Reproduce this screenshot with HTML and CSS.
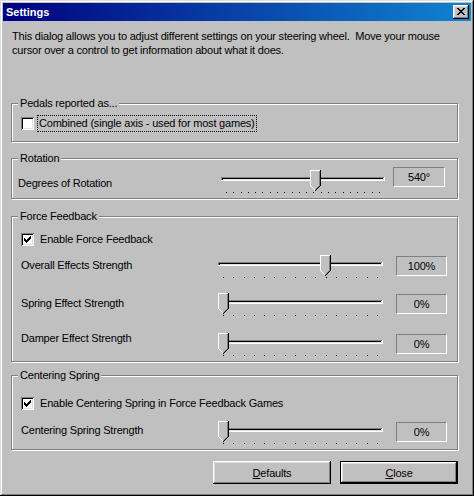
FILE: index.html
```html
<!DOCTYPE html>
<html>
<head>
<meta charset="utf-8">
<title>Settings</title>
<link rel="stylesheet" href="styles.css">
</head>
<body>
<svg class="defs" width="0" height="0" aria-hidden="true">
  <defs>
    <symbol id="thumb" viewBox="0 0 11 21" width="11" height="21">
      <path fill="#c0c0c0" d="M0 0h11v16H0z M1 16h9v1H1z M2 17h7v1H2z M3 18h5v1H3z M4 19h3v1H4z M5 20h1v1H5z"/>
      <path fill="#ffffff" d="M0 0h10v1H1v15H0z M1 16h1v1H1z M2 17h1v1H2z M3 18h1v1H3z M4 19h1v1H4z"/>
      <path fill="#808080" d="M9 1h1v15H9z M8 16h1v1H8z M7 17h1v1H7z M6 18h1v1H6z M5 19h1v1H5z"/>
      <path fill="#000000" d="M10 0h1v16h-1z M9 16h1v1H9z M8 17h1v1H8z M7 18h1v1H7z M6 19h1v1H6z M5 20h1v1H5z"/>
    </symbol>
    <symbol id="ticks16" viewBox="0 0 165 1" width="165" height="1">
      <path fill="#000" d="M5 0h1v1H5z M15 0h1v1h-1z M26 0h1v1h-1z M36 0h1v1h-1z M46 0h1v1h-1z M56 0h1v1h-1z M67 0h1v1h-1z M77 0h1v1h-1z M87 0h1v1h-1z M97 0h1v1h-1z M108 0h1v1h-1z M118 0h1v1h-1z M128 0h1v1h-1z M138 0h1v1h-1z M149 0h1v1h-1z M159 0h1v1h-1z"/>
    </symbol>
    <symbol id="ticks22" viewBox="0 0 164 1" width="164" height="1">
      <path fill="#000" d="M5 0h1v1H5z M12 0h1v1h-1z M20 0h1v1h-1z M27 0h1v1h-1z M34 0h1v1h-1z M41 0h1v1h-1z M49 0h1v1h-1z M56 0h1v1h-1z M63 0h1v1h-1z M71 0h1v1h-1z M78 0h1v1h-1z M85 0h1v1h-1z M92 0h1v1h-1z M100 0h1v1h-1z M107 0h1v1h-1z M114 0h1v1h-1z M122 0h1v1h-1z M129 0h1v1h-1z M136 0h1v1h-1z M143 0h1v1h-1z M151 0h1v1h-1z M158 0h1v1h-1z"/>
    </symbol>
    <symbol id="chan165" viewBox="0 0 165 4" width="165" height="4">
      <path fill="#808080" d="M0 0h164v1H1v2H0z"/>
      <path fill="#000000" d="M1 1h162v1H2v1H1z"/>
      <path fill="#dfdfdf" d="M2 2h161v1H2z M163 1h1v2h-1z"/>
      <path fill="#ffffff" d="M0 3h165v1H0z M164 0h1v3h-1z"/>
    </symbol>
    <symbol id="chan164" viewBox="0 0 164 4" width="164" height="4">
      <path fill="#808080" d="M0 0h163v1H1v2H0z"/>
      <path fill="#000000" d="M1 1h161v1H2v1H1z"/>
      <path fill="#dfdfdf" d="M2 2h160v1H2z M162 1h1v2h-1z"/>
      <path fill="#ffffff" d="M0 3h164v1H0z M163 0h1v3h-1z"/>
    </symbol>
    <symbol id="check" viewBox="0 0 13 13" width="13" height="13">
      <path fill="#000" d="M3 5h1v3H3z M4 6h1v3H4z M5 7h1v3H5z M6 6h1v3H6z M7 5h1v3H7z M8 4h1v3H8z M9 3h1v3H9z"/>
    </symbol>
  </defs>
</svg>

<div class="window">
  <div class="titlebar">
    <span class="title">Settings</span>
    <span class="xbtn">
      <svg width="8" height="7" viewBox="0 0 8 7" shape-rendering="crispEdges"><path fill="#000" d="M0 0h2v1H0z M6 0h2v1H6z M1 1h2v1H1z M5 1h2v1H5z M2 2h4v1H2z M3 3h2v1H3z M2 4h4v1H2z M1 5h2v1H1z M5 5h2v1H5z M0 6h2v1H0z M6 6h2v1H6z"/></svg>
    </span>
  </div>

  <div class="content">
    <p class="intro">This dialog allows you to adjust different settings on your steering wheel.&nbsp; Move your mouse<br>cursor over a control to get information about what it does.</p>

    <div class="group g-pedals">
      <div class="legend">Pedals reported as...</div>
      <div class="check-row r-pedals">
        <span class="checkbox"></span>
        <span class="clabel focus">Combined (single axis - used for most games)</span>
      </div>
    </div>

    <div class="group g-rotation">
      <div class="legend">Rotation</div>
      <div class="srow r-rotation">
        <span class="slabel">Degrees of Rotation</span>
        <svg class="slider" width="164" height="24" viewBox="0 0 164 24" shape-rendering="crispEdges">
          <use href="#chan164" x="0" y="7"/>
          <use href="#ticks22" x="0" y="22"/>
          <use href="#thumb" x="89" y="0"/>
        </svg>
        <span class="value">540°</span>
      </div>
    </div>

    <div class="group g-force">
      <div class="legend">Force Feedback</div>
      <div class="check-row r-force">
        <span class="checkbox"><svg width="13" height="13" shape-rendering="crispEdges"><use href="#check"/></svg></span>
        <span class="clabel">Enable Force Feedback</span>
      </div>
      <div class="srow r-overall">
        <span class="slabel">Overall Effects Strength</span>
        <svg class="slider" width="165" height="24" viewBox="0 0 165 24" shape-rendering="crispEdges">
          <use href="#chan165" x="0" y="7"/>
          <use href="#ticks16" x="0" y="22"/>
          <use href="#thumb" x="102" y="0"/>
        </svg>
        <span class="value">100%</span>
      </div>
      <div class="srow r-spring">
        <span class="slabel">Spring Effect Strength</span>
        <svg class="slider" width="165" height="24" viewBox="0 0 165 24" shape-rendering="crispEdges">
          <use href="#chan165" x="0" y="7"/>
          <use href="#ticks16" x="0" y="22"/>
          <use href="#thumb" x="0" y="0"/>
        </svg>
        <span class="value">0%</span>
      </div>
      <div class="srow r-damper">
        <span class="slabel">Damper Effect Strength</span>
        <svg class="slider" width="165" height="24" viewBox="0 0 165 24" shape-rendering="crispEdges">
          <use href="#chan165" x="0" y="7"/>
          <use href="#ticks16" x="0" y="22"/>
          <use href="#thumb" x="0" y="0"/>
        </svg>
        <span class="value">0%</span>
      </div>
    </div>

    <div class="group g-center">
      <div class="legend">Centering Spring</div>
      <div class="check-row r-center">
        <span class="checkbox"><svg width="13" height="13" shape-rendering="crispEdges"><use href="#check"/></svg></span>
        <span class="clabel">Enable Centering Spring in Force Feedback Games</span>
      </div>
      <div class="srow r-cstrength">
        <span class="slabel">Centering Spring Strength</span>
        <svg class="slider" width="165" height="24" viewBox="0 0 165 24" shape-rendering="crispEdges">
          <use href="#chan165" x="0" y="7"/>
          <use href="#ticks16" x="0" y="22"/>
          <use href="#thumb" x="0" y="0"/>
        </svg>
        <span class="value">0%</span>
      </div>
    </div>

    <div class="buttons">
      <button class="btn"><u>D</u>efaults</button>
      <button class="btn default"><u>C</u>lose</button>
    </div>
  </div>
</div>
</body>
</html>
```

FILE: styles.css
```css
* { box-sizing: border-box; }

html, body {
  margin: 0;
  background: #c0c0c0;
}

body {
  font-family: "Liberation Sans", Arial, sans-serif;
  font-size: 11px;
  letter-spacing: -0.2px;
  color: #000;
}

.defs {
  position: absolute;
  width: 0;
  height: 0;
  overflow: hidden;
}

.window {
  width: 474px;
  height: 496px;
  padding: 3px;
  background: #c0c0c0;
  box-shadow: inset -1px -1px #000, inset 1px 1px #dfdfdf,
              inset -2px -2px #808080, inset 2px 2px #fff;
  overflow: hidden;
}

.titlebar {
  height: 18px;
  display: flex;
  align-items: center;
  padding-left: 3px;
  background: linear-gradient(to right, #000080, #1084d0);
  color: #fff;
}

.title {
  font-weight: bold;
  line-height: 13px;
  letter-spacing: 0;
}

.xbtn {
  margin-left: auto;
  margin-right: 2px;
  width: 16px;
  height: 14px;
  background: #c0c0c0;
  box-shadow: inset -1px -1px #000, inset 1px 1px #fff,
              inset -2px -2px #808080, inset 2px 2px #dfdfdf;
  display: flex;
  padding: 3px 0 0 4px;
}

.xbtn svg { display: block; }

.content {
  padding: 0 13px 0 8px;
}

.intro {
  margin: 8px 0 0 1px;
  line-height: 14px;
  white-space: nowrap;
}

.group {
  border: 1px solid #808080;
  box-shadow: inset 1px 1px #fff, 1px 1px #fff;
}

.legend {
  width: max-content;
  margin: -7px 0 0 6px;
  padding: 0 2px;
  line-height: 13px;
  background: #c0c0c0;
}

.g-pedals  { margin-top: 46px; height: 39px; }
.g-rotation{ margin-top: 16px; height: 41px; }
.g-force   { margin-top: 17px; height: 146px; }
.g-center  { margin-top: 13px; height: 75px; }

.check-row {
  display: flex;
  align-items: center;
  height: 13px;
  padding-left: 9px;
}

.checkbox {
  flex: none;
  width: 13px;
  height: 13px;
  background: #fff;
  box-shadow: inset 1px 1px #808080, inset -1px -1px #fff,
              inset 2px 2px #000, inset -2px -2px #dfdfdf;
}

.checkbox svg { display: block; }

.clabel {
  margin-left: 6px;
  line-height: 13px;
  white-space: nowrap;
}

.clabel.focus {
  margin-left: 3px;
  padding: 1px 1px;
  border: 1px dotted #000;
}

.r-pedals { margin-top: 7px; }
.r-force  { margin-top: 10px; }
.r-center { margin-top: 15px; }

.srow {
  display: flex;
  align-items: flex-start;
  padding-left: 9px;
}

.slabel {
  flex: none;
  width: 197px;
  line-height: 13px;
  white-space: nowrap;
  margin-top: 4px;
}

.slider {
  display: block;
  flex: none;
}

.value {
  flex: none;
  width: 51px;
  height: 20px;
  margin-left: 13px;
  margin-top: 1px;
  border: 1px solid;
  border-color: #808080 #fff #fff #808080;
  text-align: center;
  line-height: 18px;
}

.r-rotation { margin-top: 2px; padding-left: 6px; }
.r-rotation .slabel { width: 203px; margin-top: 10px; }
.r-rotation .slider { margin-top: 3px; }
.r-rotation .value { margin-left: 8px; margin-top: 0; width: 52px; }

.r-overall { margin-top: 9px; }
.r-spring  { margin-top: 14px; }
.r-damper  { margin-top: 16px; }
.r-damper .slabel { margin-top: -1px; }
.r-cstrength { margin-top: 11px; }
.r-cstrength .slabel { margin-top: 3px; }

.buttons {
  display: flex;
  gap: 9px;
  margin-top: 11px;
  padding-left: 202px;
}

.btn {
  width: 120px;
  height: 23px;
  padding: 0;
  border: none;
  background: #c0c0c0;
  font: inherit;
  letter-spacing: inherit;
  color: #000;
  box-shadow: inset -1px -1px #000, inset 1px 1px #fff,
              inset -2px -2px #808080, inset 2px 2px #dfdfdf;
}

.btn.default {
  box-shadow: inset 0 0 0 1px #000,
              inset -2px -2px #000, inset 2px 2px #fff,
              inset -3px -3px #808080, inset 3px 3px #dfdfdf;
}
```
